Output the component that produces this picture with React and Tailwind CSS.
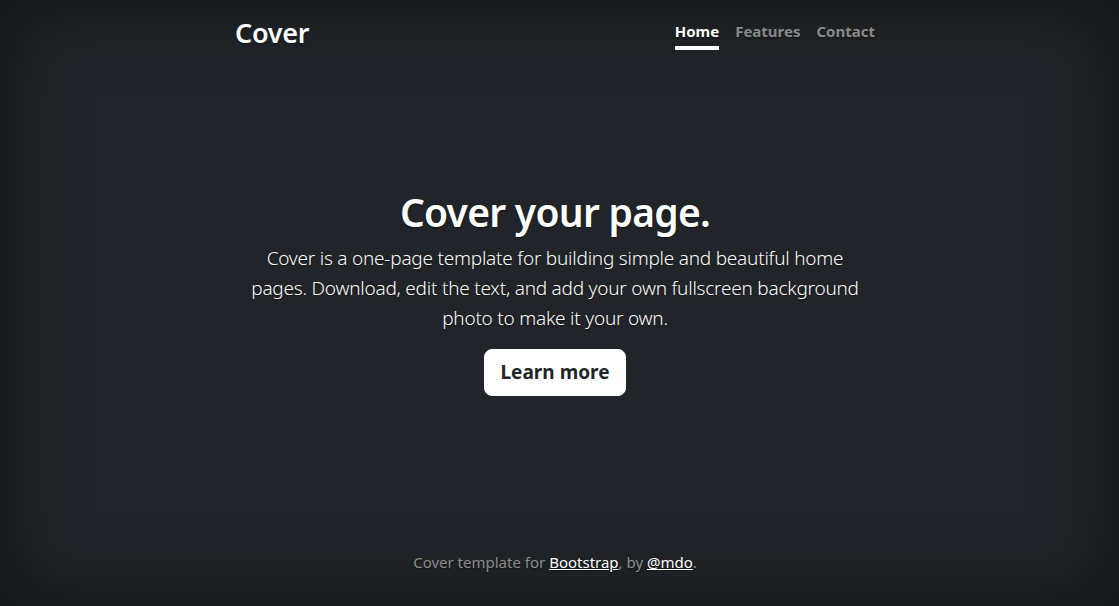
import React from "react";

export default function App() {
  return (
    <div
      className="h-screen bg-[#212529] pr-[9px] text-white text-center shadow-[inset_0_0_5rem_rgba(0,0,0,0.5)] [text-shadow:0_0.05rem_0.1rem_rgba(0,0,0,0.5)]"
      style={{ fontFamily: '"Noto Sans", "Open Sans", sans-serif' }}
    >
      <div className="mx-auto flex h-full w-full max-w-[42em] flex-col p-4">
        {/* Masthead */}
        <header className="mb-auto flex h-[34px] items-start justify-between">
          <h3 className="m-0 text-[27px] font-semibold leading-[34px] tracking-[-0.01em]">Cover</h3>
          <nav className="flex gap-4 text-[15px] font-bold leading-[22px]">
            <a href="#" className="border-b-4 border-white py-1 text-white">Home</a>
            <a href="#" className="border-b-4 border-transparent py-1 text-white/50 hover:border-white/25">Features</a>
            <a href="#" className="border-b-4 border-transparent py-1 text-white/50 hover:border-white/25">Contact</a>
          </nav>
        </header>

        {/* Main */}
        <main className="mb-4">
          <h1 className="mb-2 text-[39px] font-semibold leading-[47px] tracking-[-0.019em]">Cover your page.</h1>
          <p className="mx-auto mb-4 max-w-[620px] text-[19px] font-light leading-[30px] tracking-[-0.012em]">
            Cover is a one-page template for building simple and beautiful home pages. Download, edit the text, and add your own fullscreen background photo to make it your own.
          </p>
          <p>
            <a
              href="#"
              className="inline-block rounded-lg border border-white bg-white px-4 py-2 text-[19px] font-bold leading-[29px] text-[#212529] [text-shadow:none]"
            >
              Learn more
            </a>
          </p>
        </main>

        {/* Footer */}
        <footer className="mt-auto text-[15px] leading-6 text-white/50">
          <p className="mb-4">
            Cover template for <a href="#" className="text-white underline">Bootstrap</a>, by{" "}
            <a href="#" className="text-white underline">@mdo</a>.
          </p>
        </footer>
      </div>
    </div>
  );
}
